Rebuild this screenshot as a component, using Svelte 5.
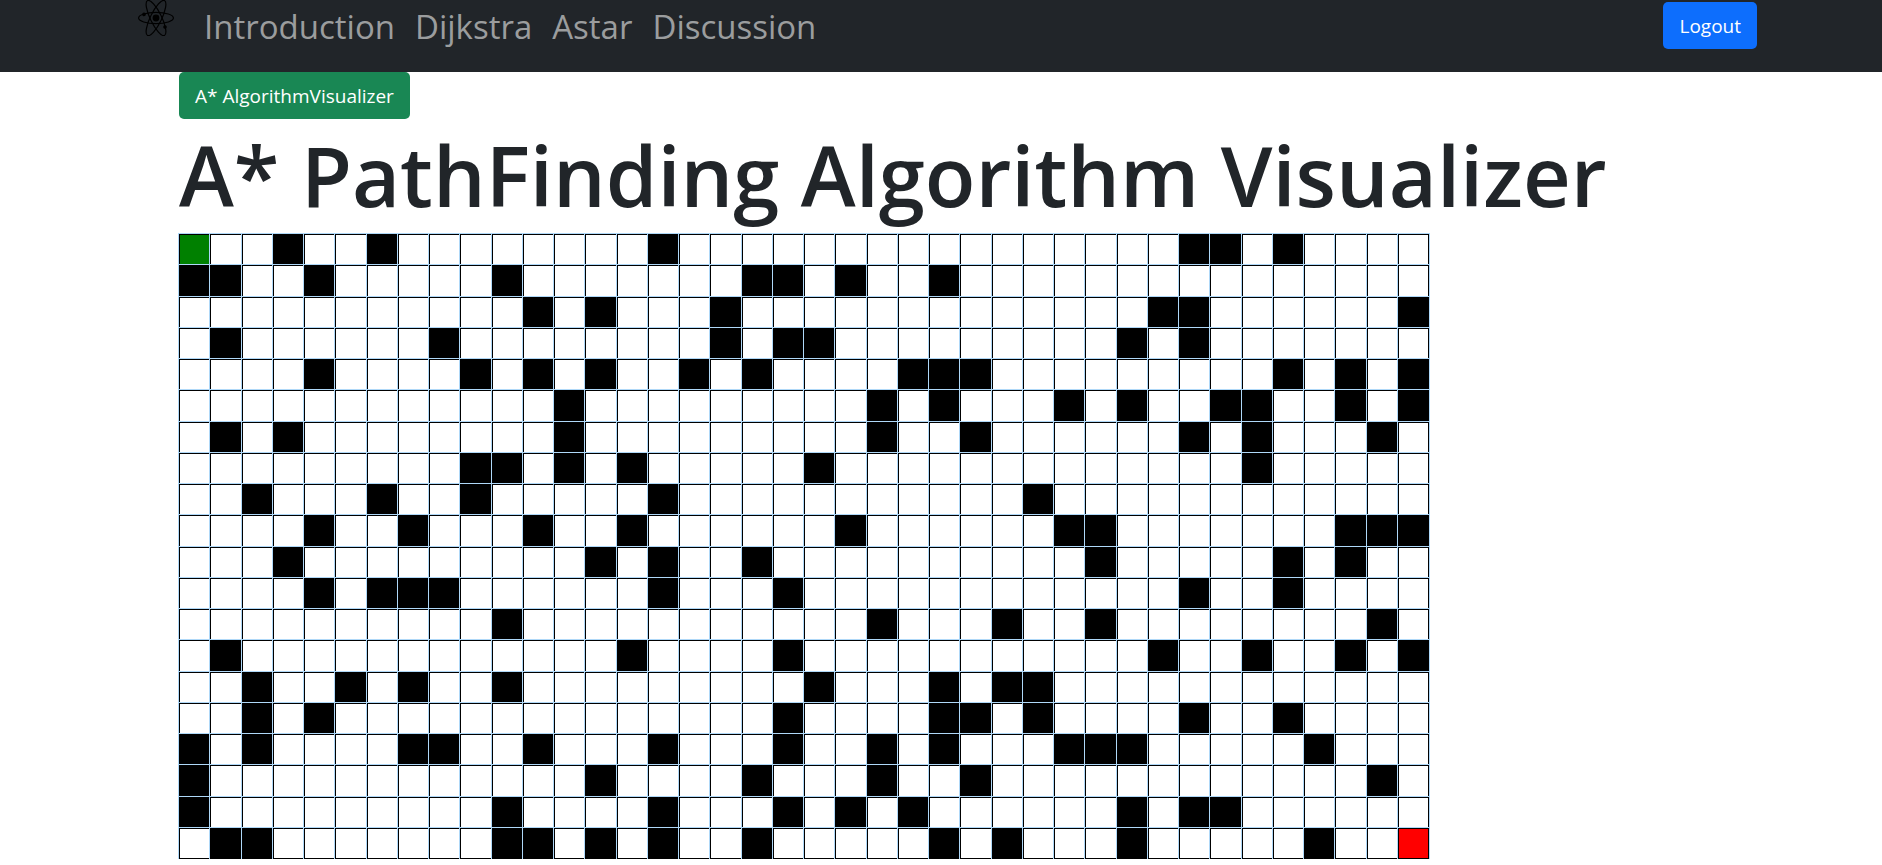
<script>
  const COLUMNS = 40;
  const walls = [
    [3, 6, 15, 32, 33, 35],
    [0, 1, 4, 10, 18, 19, 21, 24],
    [11, 13, 17, 31, 32, 39],
    [1, 8, 17, 19, 20, 30, 32],
    [4, 9, 11, 13, 16, 18, 23, 24, 25, 35, 37, 39],
    [12, 22, 24, 28, 30, 33, 34, 37, 39],
    [1, 3, 12, 22, 25, 32, 34, 38],
    [9, 10, 12, 14, 20, 34],
    [2, 6, 9, 15, 27],
    [4, 7, 11, 14, 21, 28, 29, 37, 38, 39],
    [3, 13, 15, 18, 29, 35, 37],
    [4, 6, 7, 8, 15, 19, 32, 35],
    [10, 22, 26, 29, 38],
    [1, 14, 19, 31, 34, 37, 39],
    [2, 5, 7, 10, 20, 24, 26, 27],
    [2, 4, 19, 24, 25, 27, 32, 35],
    [0, 2, 7, 8, 11, 15, 19, 22, 24, 28, 29, 30, 36],
    [0, 13, 18, 22, 25, 38],
    [0, 10, 15, 19, 21, 23, 30, 32, 33],
    [1, 2, 10, 11, 13, 15, 18, 24, 26, 30, 36],
  ];
  const links = ['Introduction', 'Dijkstra', 'Astar', 'Discussion'];

  const cells = walls.flatMap((row, y) =>
    Array.from({ length: COLUMNS }, (_, x) => ({
      wall: row.includes(x),
      start: x === 0 && y === 0,
      end: x === COLUMNS - 1 && y === walls.length - 1,
    }))
  );
</script>

<header>
  <nav>
    <a class="brand" href="#home" aria-label="Home">
      <svg viewBox="0 0 36 36" fill="none" stroke="#000" stroke-width="1.2">
        <ellipse cx="18" cy="18" rx="17.4" ry="5.6" />
        <ellipse cx="18" cy="18" rx="19.4" ry="5.6" transform="rotate(64 18 18)" />
        <ellipse cx="18" cy="18" rx="19.4" ry="5.6" transform="rotate(-64 18 18)" />
        <circle cx="18" cy="18" r="2.8" fill="#000" />
        <circle cx="6" cy="14.4" r="1.2" fill="#000" />
        <circle cx="27" cy="27" r="1.2" fill="#000" />
      </svg>
    </a>
    <div class="links">
      {#each links as link}
        <a href={'#' + link.toLowerCase()}>{link}</a>
      {/each}
    </div>
    <button class="btn primary" type="button">Logout</button>
  </nav>
</header>

<main>
  <button class="btn success" type="button">A* AlgorithmVisualizer</button>
  <h1>A* PathFinding Algorithm Visualizer</h1>
  <div class="grid">
    {#each cells as cell}
      <div class="cell" class:wall={cell.wall} class:start={cell.start} class:end={cell.end}></div>
    {/each}
  </div>
</main>

<style>
  :global(body) {
    margin: 0;
    background: #fff;
    color: #212529;
    font-family: 'Segoe UI', 'Open Sans', 'Noto Sans', sans-serif;
  }
  header {
    background: #212529;
  }
  nav {
    display: flex;
    align-items: flex-start;
    box-sizing: border-box;
    max-width: 1632px;
    min-height: 72px;
    margin: 0 auto;
    padding-left: 13px;
  }
  .brand {
    display: block;
    margin-right: 20px;
  }
  .brand svg {
    display: block;
    width: 36px;
    height: 36px;
  }
  .links {
    display: flex;
    flex: 1;
  }
  .links a {
    padding: 0 10px;
    color: #9b9d9e;
    font-size: 33px;
    line-height: 54px;
    text-decoration: none;
  }
  .btn {
    height: 47px;
    padding: 0 16px;
    border: 0;
    border-radius: 5px;
    color: #fff;
    font-family: inherit;
    font-size: 19px;
    line-height: 30px;
    white-space: nowrap;
    cursor: pointer;
  }
  .primary {
    margin-top: 2px;
    background: #0d6efd;
  }
  .success {
    display: block;
    background: #198754;
  }
  main {
    max-width: 1524px;
    margin: 0 auto;
  }
  h1 {
    margin: 3px 0 7px;
    font-size: 83px;
    font-weight: 600;
    line-height: 105px;
  }
  .grid {
    display: grid;
    grid-template-columns: repeat(40, 1fr);
    grid-template-rows: repeat(20, 1fr);
    max-width: 1250px;
    aspect-ratio: 2 / 1;
  }
  .cell {
    border: 1px solid #000;
    outline: 1px solid #afd8f8;
  }
  .wall {
    background: #000;
  }
  .start {
    background: green;
  }
  .end {
    background: red;
  }
</style>
